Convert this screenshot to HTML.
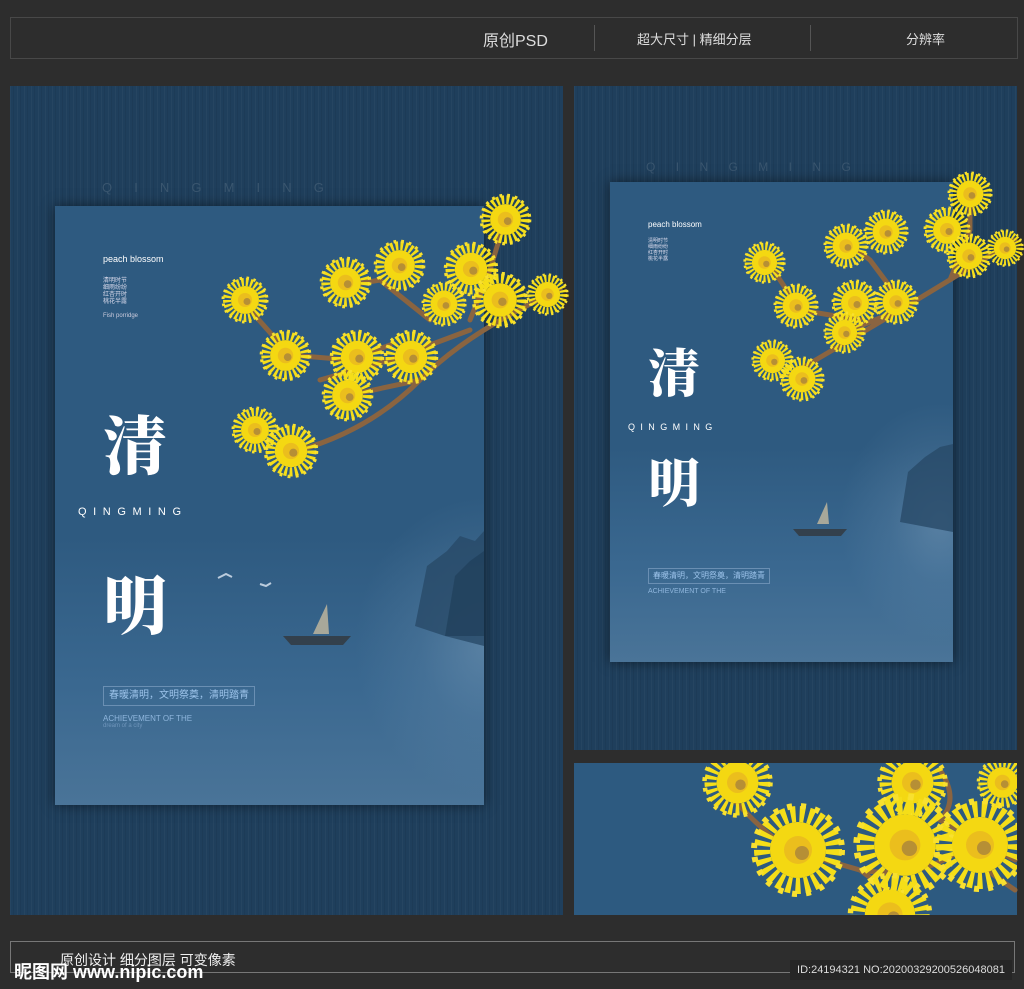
<!DOCTYPE html><html><head><meta charset="utf-8"><style>
body{margin:0;width:1024px;height:989px;background:#2d2d2d;position:relative;overflow:hidden;font-family:"Liberation Sans","Noto Sans CJK SC",sans-serif}
.a{position:absolute}
.stripe{background:#1f3f5c;background-image:repeating-linear-gradient(90deg,rgba(255,255,255,.03) 0 1px,transparent 1px 3px,rgba(0,0,0,.06) 3px 4px,transparent 4px 7px)}
.poster{background:linear-gradient(180deg,#2e5a80 0%,#2e5a80 55%,#3a6890 80%,#4a7498 100%);box-shadow:0 0 12px rgba(0,0,0,.5)}
.big{color:#fff;font-family:"Noto Serif CJK SC",serif;font-weight:900}
.sp{color:#fff;letter-spacing:.6em}
</style></head><body>
<div class="a" style="left:10px;top:17px;width:1006px;height:40px;border:1px solid #484848"></div>
<div class="a" style="left:483px;top:27px;color:#ddd;font-size:16px">原创PSD</div>
<div class="a" style="left:594px;top:25px;width:1px;height:26px;background:#555"></div>
<div class="a" style="left:637px;top:29px;color:#ddd;font-size:13px">超大尺寸 | 精细分层</div>
<div class="a" style="left:810px;top:25px;width:1px;height:26px;background:#555"></div>
<div class="a" style="left:906px;top:29px;color:#ddd;font-size:13px">分辨率</div>

<div class="a stripe" style="left:10px;top:86px;width:553px;height:829px"></div>
<div class="a stripe" style="left:574px;top:86px;width:443px;height:664px"></div>
<div class="a" style="left:574px;top:763px;width:443px;height:152px;background:#2d5a80"></div>
<div class="a sp" style="left:102px;top:180px;font-size:13px;color:#3a566f;letter-spacing:1.7em">QINGMING</div>
<div class="a sp" style="left:646px;top:160px;font-size:12px;color:#3a566f;letter-spacing:1.7em">QINGMING</div>

<div class="a poster" style="left:55px;top:206px;width:429px;height:599px;overflow:hidden">
 <div class="a" style="left:300px;top:290px;width:260px;height:300px;background:radial-gradient(closest-side,rgba(150,180,205,.35) 0%,rgba(120,155,185,.18) 50%,transparent 100%)"></div>
 <svg class="a" style="left:0;top:0" width="429" height="599"><path d="M360 420 L372 360 L392 345 L405 330 L420 335 L429 325 L429 440 L390 430Z" fill="#284a68" opacity=".8"/><path d="M390 430 L400 370 L415 355 L429 345 L429 430Z" fill="#203e5a" opacity=".7"/></svg>
 <div class="a" style="left:48px;top:48px;color:#fff;font-size:9px">peach blossom</div>
 <div class="a" style="left:48px;top:72px;color:#dde;font-size:6px;line-height:7px">清明时节<br>细雨纷纷<br>红杏开时<br>桃花半露</div>
 <div class="a" style="left:48px;top:107px;color:#ccd;font-size:6px">Fish porridge</div>
 <div class="a big" style="left:48px;top:190px;font-size:64px">清</div>
 <div class="a sp" style="left:23px;top:300px;font-size:11px">QINGMING</div>
 <div class="a big" style="left:48px;top:350px;font-size:64px">明</div>
 <div class="a" style="left:48px;top:480px;width:150px;height:18px;border:1px solid #6a8fb3;color:#9cc3ea;font-size:10px;line-height:18px;text-align:center">春暖清明，文明祭奠，清明踏青</div>
 <div class="a" style="left:48px;top:508px;color:#8fb6dd;font-size:8px">ACHIEVEMENT OF THE</div>
 <div class="a" style="left:48px;top:517px;color:#6f95bb;font-size:6px">dream of a city</div>
 <svg class="a" style="left:0;top:0" width="429" height="599"><path d="M228 430h68l-8 9h-52z" fill="#33404c"/><path d="M258 428l14-30 2 30z" fill="#a8a89a"/><path d="M163 372l8-4 6 3M205 378l6 2 5-3" stroke="#bcd" stroke-width="2" fill="none"/></svg>
</div>
<div class="a poster" style="left:610px;top:182px;width:343px;height:480px;overflow:hidden">
 <div class="a" style="left:230px;top:220px;width:200px;height:240px;background:radial-gradient(closest-side,rgba(150,180,205,.35) 0%,rgba(120,155,185,.18) 50%,transparent 100%)"></div>
 <svg class="a" style="left:0;top:0" width="343" height="480"><path d="M290 340 L298 290 L315 275 L330 265 L343 262 L343 350Z" fill="#284a68" opacity=".8"/></svg>
 <div class="a" style="left:38px;top:38px;color:#fff;font-size:8px">peach blossom</div>
 <div class="a" style="left:38px;top:56px;color:#dde;font-size:5px;line-height:6px">清明时节<br>细雨纷纷<br>红杏开时<br>桃花半露</div>
 <div class="a big" style="left:38px;top:150px;font-size:52px">清</div>
 <div class="a sp" style="left:18px;top:240px;font-size:9px">QINGMING</div>
 <div class="a big" style="left:38px;top:260px;font-size:52px">明</div>
 <div class="a" style="left:38px;top:386px;width:120px;height:14px;border:1px solid #6a8fb3;color:#9cc3ea;font-size:8px;line-height:14px;text-align:center">春暖清明，文明祭奠，清明踏青</div>
 <div class="a" style="left:38px;top:406px;color:#8fb6dd;font-size:7px">ACHIEVEMENT OF THE</div>
 <svg class="a" style="left:0;top:0" width="343" height="480"><path d="M183 347h54l-6 7h-42z" fill="#33404c"/><path d="M207 342l10-22 2 22z" fill="#a8a89a"/></svg>
</div>

<svg class="a" style="left:0;top:0" width="1024" height="989">
<defs><symbol id="f" viewBox="-50 -50 100 100"><circle r="36" fill="none" stroke="#f5de18" stroke-width="16" stroke-dasharray="5 4"/><circle r="44" fill="none" stroke="#f8e030" stroke-width="6" stroke-dasharray="5 9"/><circle r="28" fill="#f4d812"/><circle r="14" fill="#e8b820" opacity=".8"/><circle cx="4" cy="3" r="7" fill="#a07a40" opacity=".7"/></symbol></defs>
<g stroke="#8a6440" stroke-width="5" fill="none" stroke-linecap="round">
<path d="M560 290 Q470 330 420 380 T300 450M470 330 L390 360 L320 380M420 380L350 395M470 320 L490 270L505 220M430 320L380 280 L350 285M390 345L350 360L290 355L250 310"/>
<path d="M1015 240 Q950 280 900 310 T790 375M900 310L850 330M950 280L970 230L970 190M900 300L870 260L850 245M860 320L800 310L770 265"/>
<path d="M725 790 Q760 830 790 850 L860 870 Q920 880 960 850M860 870 L900 900M940 770 Q960 800 940 820L1015 860M960 850 Q1000 880 1015 890"/>
</g>
<g>
<use href="#f" x="220" y="275" width="50" height="50"/><use href="#f" x="258" y="328" width="55" height="55"/><use href="#f" x="318" y="255" width="55" height="55"/><use href="#f" x="372" y="238" width="55" height="55"/><use href="#f" x="442" y="240" width="58" height="58"/><use href="#f" x="478" y="192" width="55" height="55"/><use href="#f" x="328" y="328" width="58" height="58"/><use href="#f" x="382" y="328" width="58" height="58"/><use href="#f" x="320" y="368" width="55" height="55"/><use href="#f" x="230" y="405" width="50" height="50"/><use href="#f" x="262" y="422" width="58" height="58"/><use href="#f" x="470" y="270" width="60" height="60"/><use href="#f" x="525" y="272" width="45" height="45"/><use href="#f" x="420" y="280" width="48" height="48"/>
<use href="#f" x="742" y="240" width="45" height="45"/><use href="#f" x="772" y="282" width="48" height="48"/><use href="#f" x="822" y="222" width="48" height="48"/><use href="#f" x="862" y="208" width="48" height="48"/><use href="#f" x="946" y="170" width="48" height="48"/><use href="#f" x="922" y="205" width="50" height="50"/><use href="#f" x="945" y="232" width="48" height="48"/><use href="#f" x="830" y="278" width="50" height="50"/><use href="#f" x="872" y="278" width="48" height="48"/><use href="#f" x="822" y="310" width="45" height="45"/><use href="#f" x="750" y="338" width="45" height="45"/><use href="#f" x="778" y="355" width="48" height="48"/><use href="#f" x="985" y="228" width="40" height="40"/>
</g>
<clipPath id="c"><rect x="574" y="763" width="443" height="152"/></clipPath>
<g clip-path="url(#c)">
<use href="#f" x="695" y="745" width="85" height="75"/><use href="#f" x="748" y="800" width="100" height="100"/><use href="#f" x="870" y="745" width="85" height="75"/><use href="#f" x="850" y="790" width="110" height="110"/><use href="#f" x="930" y="795" width="100" height="100"/><use href="#f" x="840" y="870" width="100" height="90"/><use href="#f" x="975" y="755" width="55" height="55"/>
</g>
</svg>

<div class="a" style="left:10px;top:941px;width:1003px;height:30px;border:1px solid #777"></div>
<div class="a" style="left:60px;top:950px;color:#eee;font-size:14px">原创设计 细分图层 可变像素</div>
<div class="a" style="left:14px;top:958px;color:#fff;font-size:18px;font-weight:bold">昵图网 www.nipic.com</div>
<div class="a" style="left:790px;top:960px;width:222px;height:20px;background:#262626;color:#ddd;font-size:11px;line-height:20px;text-align:center">ID:24194321 NO:20200329200526048081</div>
</body></html>
